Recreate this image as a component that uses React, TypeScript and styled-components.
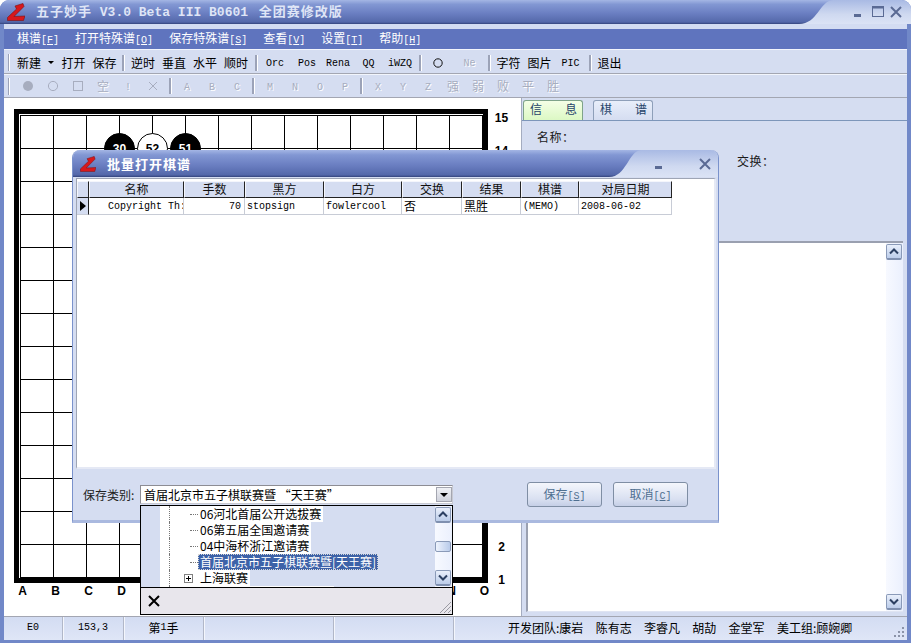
import styled, { createGlobalStyle } from "styled-components";

const CJK = '"Noto Sans CJK SC", "Liberation Sans", sans-serif';
const MONO = '"Liberation Mono", "Noto Sans CJK SC", monospace';

const GlobalStyle = createGlobalStyle`
  html, body {
    margin: 0;
    padding: 0;
    background: #fff;
  }
  * {
    box-sizing: border-box;
  }
`;

const Window = styled.div`
  position: relative;
  width: 911px;
  height: 643px;
  display: flex;
  flex-direction: column;
  overflow: hidden;
  border-radius: 9px 9px 0 0;
  background: #7188c8;
  font-family: ${CJK};
  font-size: 12px;
  line-height: 16px;
  color: #000;
`;

const TitleBar = styled.div<{ $height: number }>`
  display: flex;
  flex: none;
  height: ${(p) => p.$height}px;
`;

const TitleDark = styled.div`
  flex: 1;
  display: flex;
  align-items: center;
  background: linear-gradient(#a4b6e4 0%, #8297d3 18%, #6b7fc2 55%, #5468aa 92%, #33437c 100%);
`;

const TitleLight = styled.div<{ $width: number }>`
  flex: none;
  width: ${(p) => p.$width}px;
  display: flex;
  align-items: center;
  justify-content: flex-end;
  background: linear-gradient(#a9bae4, #cfd9f0 60%, #dbe3f5);
`;

const AppTitle = styled.span<{ $left: number }>`
  margin-left: ${(p) => p.$left}px;
  font-weight: 700;
  font-size: 13px;
  letter-spacing: 1px;
  color: #dfe5f6;
  white-space: pre;
`;

const AppTitleMono = styled.span`
  font-family: ${MONO};
  font-size: 13px;
  letter-spacing: 0;
  font-weight: 700;
  margin-right: 3px;
`;

const DialogTitle = styled.span`
  margin-left: 11px;
  font-weight: 700;
  font-size: 13px;
  letter-spacing: 1px;
  color: #fff;
`;

const LogoWrap = styled.svg<{ $left: number }>`
  flex: none;
  margin-left: ${(p) => p.$left}px;
`;

const CaptionButton = styled.svg`
  flex: none;
  display: block;
`;

const Content = styled.div`
  flex: 1;
  min-height: 0;
  margin: 0 4px 3px;
  display: flex;
  flex-direction: column;
  background: #d5ddf1;
`;

const TopStrip = styled.div`
  flex: none;
  height: 5px;
  background: #d3dcf2;
`;

const MenuBar = styled.div`
  flex: none;
  height: 20px;
  display: flex;
  align-items: center;
  gap: 16px;
  padding-left: 13px;
  background: #5f74be;
  color: #fff;
`;

const MenuItem = styled.span`
  white-space: nowrap;
`;

const Mono = styled.span`
  font-family: ${MONO};
  font-size: 10px;
`;

const Toolbar = styled.div<{ $height: number; $top?: number }>`
  flex: none;
  height: ${(p) => p.$height}px;
  display: flex;
  align-items: center;
  padding: ${(p) => p.$top ?? 0}px 0 0 4px;
  border-top: 1px solid #f2f5fc;
  border-bottom: 1px solid #a3a6b2;
  background: #d5ddf1;
`;

const Grip = styled.i<{ $gap: number }>`
  flex: none;
  width: 2px;
  height: 17px;
  margin-right: ${(p) => p.$gap}px;
  background: #9ba2b8;
  border-right: 1px solid #fff;
`;

const ToolButton = styled.span<{ $w: number; $shift?: number; $off?: boolean }>`
  flex: none;
  width: ${(p) => p.$w}px;
  padding-left: ${(p) => p.$shift ?? 0}px;
  text-align: center;
  white-space: nowrap;
  color: ${(p) => (p.$off ? "#a7adbf" : "#000")};
  text-shadow: ${(p) => (p.$off ? "1px 1px 0 #fff" : "none")};
`;

const ToolLatin = styled.span`
  font-family: ${MONO};
  font-size: 10px;
`;

const Separator = styled.span<{ $w: number }>`
  flex: none;
  width: ${(p) => p.$w}px;
  display: flex;
  justify-content: center;

  &::after {
    content: "";
    width: 2px;
    height: 16px;
    background: #9ca3b8;
    border-right: 1px solid #fff;
  }
`;

const Shape = styled.svg`
  display: block;
  margin: 0 auto;
`;

const DropCaret = styled.i`
  display: block;
  width: 0;
  height: 0;
  margin: 0 auto;
  border-style: solid;
  border-width: 3px 3px 0;
  border-color: #000 transparent transparent;
`;

const Main = styled.div`
  flex: 1;
  min-height: 0;
  display: flex;
`;

const BoardArea = styled.div`
  flex: none;
  width: 517px;
  background: #fff;
  padding: 11px 0 0 10px;
  display: grid;
  grid-template-columns: 474px auto;
  grid-template-rows: 474px auto;
  align-content: start;
`;

const BoardFrame = styled.div`
  width: 474px;
  height: 474px;
  border: 5px solid #000;
  padding: 1px 0 0 1px;
`;

const BoardGrid = styled.div`
  position: relative;
  width: 463px;
  height: 463px;
  background-color: #fff;
  background-image:
    repeating-linear-gradient(to right, #000 0, #000 1px, transparent 1px, transparent 33px),
    repeating-linear-gradient(to bottom, #000 0, #000 1px, transparent 1px, transparent 33px);
`;

const Stone = styled.div<{ $col: number; $row: number; $white?: boolean }>`
  position: absolute;
  left: ${(p) => p.$col * 33 - 15}px;
  top: ${(p) => p.$row * 33 - 15}px;
  width: 31px;
  height: 31px;
  border-radius: 50%;
  display: flex;
  align-items: center;
  justify-content: center;
  border: 1px solid #000;
  background: ${(p) => (p.$white ? "#fff" : "#000")};
  color: ${(p) => (p.$white ? "#000" : "#fff")};
  font-family: "Liberation Sans", sans-serif;
  font-weight: 700;
  font-size: 12px;
`;

const RowLabels = styled.div`
  margin-top: -7px;
  padding-left: 5px;
  display: flex;
  flex-direction: column;
`;

const ColLabels = styled.div`
  display: flex;
  margin-left: -8px;
`;

const AxisLabel = styled.span`
  flex: none;
  width: 33px;
  height: 16px;
  font-family: "Liberation Sans", sans-serif;
  font-weight: 700;
  font-size: 12px;
  line-height: 16px;
  text-align: center;
`;

const RowLabel = styled(AxisLabel)`
  width: 17px;
  height: 33px;
  line-height: 33px;
`;

const SidePanel = styled.div`
  flex: 1;
  min-width: 0;
  display: flex;
  flex-direction: column;
  background: #d5ddf1;
  border-left: 1px solid #a4acc0;
`;

const Tabs = styled.div`
  flex: none;
  height: 23px;
  padding: 2px 0 0 1px;
  display: flex;
  gap: 10px;
  border-bottom: 1px solid #7d96ba;
`;

const Tab = styled.span<{ $active?: boolean }>`
  width: 60px;
  height: 20px;
  padding: 0 5px 0 6px;
  display: flex;
  justify-content: space-between;
  border: 1px solid ${(p) => (p.$active ? "#7fa38a" : "#8e9fb9")};
  border-bottom: none;
  border-radius: 3px 3px 0 0;
  background: ${(p) => (p.$active ? "linear-gradient(#f4ffe6, #dcf8c4)" : "linear-gradient(#e8eefa, #d5ddf1)")};
  color: #27446a;
`;

const InfoGrid = styled.div`
  flex: none;
  height: 120px;
  padding: 8px 15px 0;
  display: grid;
  grid-template-columns: 200px 1fr;
  grid-auto-rows: 24px;
  align-content: start;
  color: #1a1a1a;
`;

const InfoLabel = styled.span`
  letter-spacing: 0.5px;
`;

const MemoWrap = styled.div`
  flex: 1;
  min-height: 0;
  margin: 0 4px 4px 4px;
  display: flex;
  background: #fff;
  border-left: 2px solid #9aa0b0;
  border-top: 2px solid #9aa0b0;
  border-bottom: 1px solid #dfe4f2;
`;

const MemoText = styled.div`
  flex: 1;
`;

const ScrollBar = styled.div`
  flex: none;
  width: 17px;
  display: flex;
  flex-direction: column;
  justify-content: space-between;
  padding: 1px 0;
  background: linear-gradient(to right, #f7f9ff, #ebf0fd);
`;

const ScrollButton = styled.div`
  flex: none;
  width: 16px;
  height: 16px;
  display: flex;
  align-items: center;
  justify-content: center;
  border: 1px solid #8a9ab8;
  border-bottom: 2px solid #7f90b0;
  border-radius: 2px;
  background: linear-gradient(#e9effb, #bccdea);
`;

const ScrollThumb = styled.div`
  flex: none;
  width: 16px;
  height: 11px;
  border: 1px solid #8a9ab8;
  border-radius: 2px;
  background: linear-gradient(to right, #eef3fd, #b9cbea);
`;

const StatusBar = styled.div`
  flex: none;
  height: 24px;
  display: flex;
  align-items: center;
  border-top: 1px solid #a3a6b2;
  background: linear-gradient(#d3dcf2, #dfe6f7);
`;

const StatusCell = styled.span<{ $w: number }>`
  flex: none;
  width: ${(p) => p.$w}px;
  height: 100%;
  padding-bottom: 2px;
  display: flex;
  align-items: center;
  justify-content: center;
  border-right: 1px solid #b1b7c8;
  box-shadow: 1px 0 0 #f4f6fc;
`;

const Team = styled.div`
  flex: 1;
  padding: 0 0 2px 54px;
  display: flex;
  gap: 12.3px;
  white-space: nowrap;
`;

const ResizeDots = styled.svg`
  flex: none;
  margin: 6px 2px 0 0;
`;

const Dialog = styled.div`
  position: absolute;
  left: 72px;
  top: 150px;
  width: 647px;
  height: 373px;
  display: flex;
  flex-direction: column;
  overflow: hidden;
  border-radius: 8px 8px 0 0;
  background: #d5ddf1;
  border-left: 1px solid #7a92cc;
  border-right: 1px solid #7a92cc;
  border-bottom: 3px solid #aab9df;
`;

const DialogBody = styled.div`
  flex: none;
  height: 291px;
  margin: 1px 2px 0 3px;
  padding: 2px 0 0 0;
  background: #fff;
  border-top: 1px solid #9ea5b5;
  border-left: 1px solid #9ea5b5;
  border-right: 2px solid #e5e9f5;
  border-bottom: 2px solid #e5e9f5;
`;

const TableRow = styled.div<{ $height: number }>`
  display: grid;
  grid-template-columns: 12px 95px 61px 79px 78px 60px 59px 58px 93px;
  width: 595px;
  height: ${(p) => p.$height}px;
`;

const HeadCell = styled.div`
  text-align: center;
  line-height: 14px;
  background: #d5ddf1;
  border-right: 1px solid #222;
  border-bottom: 1px solid #222;
  border-left: 1px solid #f4f6fc;
  border-top: 1px solid #f4f6fc;
  color: #111;
`;

const Cell = styled.div<{ $right?: boolean; $pad?: number }>`
  padding: 0 ${(p) => (p.$right ? 3 : 0)}px 0 ${(p) => p.$pad ?? 2}px;
  overflow: hidden;
  white-space: nowrap;
  text-align: ${(p) => (p.$right ? "right" : "left")};
  font-family: ${MONO};
  font-size: 10px;
  line-height: 17px;
  border-right: 1px solid #c8ccd6;
  border-bottom: 1px solid #c8ccd6;
`;

const CjkCell = styled(Cell)`
  font-family: ${CJK};
  font-size: 12px;
  line-height: 15px;
`;

const Indicator = styled.div`
  display: flex;
  align-items: center;
  justify-content: center;
  background: #d5ddf1;
  border-right: 1px solid #222;
  border-bottom: 1px solid #c8ccd6;

  &::after {
    content: "";
    border-style: solid;
    border-width: 5px 0 5px 6px;
    border-color: transparent transparent transparent #000;
  }
`;

const DialogFooter = styled.div`
  flex: 1;
  display: flex;
  align-items: center;
  padding-left: 10px;
`;

const ComboLabel = styled.span`
  flex: none;
  width: 57px;
  color: #222;
`;

const Combo = styled.div`
  flex: none;
  width: 313px;
  height: 19px;
  display: flex;
  align-items: center;
  justify-content: space-between;
  padding: 0 0 0 3px;
  background: #fff;
  border: 1px solid #8d8d94;
  border-right-color: #c7c9d2;
  border-bottom-color: #c7c9d2;
  white-space: nowrap;
`;

const ComboArrow = styled.span`
  flex: none;
  width: 16px;
  height: 15px;
  display: flex;
  align-items: center;
  background: linear-gradient(#f0f1f5, #cfd2dc);
  border: 1px solid #a4a6b0;
`;

const ComboCaret = styled(DropCaret)`
  border-width: 4px 4px 0;
`;

const DialogButtons = styled.div`
  margin-left: 74px;
  display: flex;
  gap: 11px;
`;

const DialogButton = styled.span`
  flex: none;
  width: 75px;
  height: 25px;
  line-height: 22px;
  text-align: center;
  color: #4f6f90;
  border: 1px solid #7f8ea4;
  border-radius: 3px;
  background: linear-gradient(#f4f6fc, #d9e0f1 70%, #c5cfe6);
`;

const ButtonHotkey = styled(Mono)`
  color: #4f6f90;
`;

const Dropdown = styled.div`
  position: absolute;
  left: 140px;
  top: 505px;
  width: 313px;
  height: 110px;
  display: flex;
  flex-direction: column;
  border: 1px solid #000;
  background: #d5ddf1;
`;

const DropdownList = styled.div`
  flex: 1;
  min-height: 0;
  display: flex;
  border-bottom: 1px solid #000;
`;

const Tree = styled.div`
  flex: 1;
  min-width: 0;
  overflow: hidden;
  padding-left: 19px;
`;

const TreeRow = styled.div<{ $leaf?: boolean; $stub?: number }>`
  position: relative;
  width: ${(p) => (p.$stub ? `${p.$stub}px` : "fit-content")};
  height: 16px;
  padding-left: 38px;
  background: #fff;
  white-space: nowrap;

  &::before {
    content: "";
    position: absolute;
    left: 9px;
    top: 0;
    bottom: 0;
    border-left: 1px dotted #777;
  }

  &::after {
    content: "";
    display: ${(p) => (p.$leaf ? "block" : "none")};
    position: absolute;
    left: 30px;
    top: 8px;
    width: 8px;
    border-top: 1px dotted #777;
  }
`;

const TreeLabel = styled.span<{ $selected?: boolean }>`
  display: inline-block;
  height: 16px;
  line-height: 15px;
  padding: 0 2px;
  background: ${(p) => (p.$selected ? "#3d62a8" : "transparent")};
  color: ${(p) => (p.$selected ? "#fff" : "#000")};
  outline: ${(p) => (p.$selected ? "1px dotted #d8d8d8" : "none")};
  outline-offset: -1px;
`;

const Expander = styled.svg`
  position: absolute;
  left: 24px;
  top: 4px;
`;

const DropdownFooter = styled.div`
  flex: none;
  height: 26px;
  display: flex;
  align-items: center;
  justify-content: space-between;
  padding-left: 7px;
  background: #e8e6ec;
`;

const CloseGlyph = styled.svg`
  flex: none;
`;

const ResizeHatch = styled.svg`
  flex: none;
  align-self: flex-end;
`;

function Logo({ left, size }: { left: number; size: number }) {
  return (
    <LogoWrap $left={left} width={size} height={size} viewBox="0 0 18 18">
      <path
        d="M8 3 L16 0.5 L17 3.5 L7 13.5 L18 13 L16.5 17.5 L0.5 17.5 L0.5 14.5 L9.5 6 Z"
        fill="#d8181c"
        stroke="#7c1212"
        strokeWidth="0.6"
      />
    </LogoWrap>
  );
}

function TitleCurve({ width, height, id }: { width: number; height: number; id: string }) {
  const bottom = height;
  return (
    <svg width={width} height={height} style={{ flex: "none", display: "block" }}>
      <defs>
        <linearGradient id={id} x1="0" y1="0" x2="0" y2="1">
          <stop offset="0" stopColor="#a4b6e4" />
          <stop offset="0.18" stopColor="#8297d3" />
          <stop offset="0.55" stopColor="#6b7fc2" />
          <stop offset="0.92" stopColor="#5468aa" />
          <stop offset="1" stopColor="#33437c" />
        </linearGradient>
        <linearGradient id={`${id}l`} x1="0" y1="0" x2="0" y2="1">
          <stop offset="0" stopColor="#a9bae4" />
          <stop offset="0.6" stopColor="#cfd9f0" />
          <stop offset="1" stopColor="#dbe3f5" />
        </linearGradient>
      </defs>
      <rect width={width} height={height} fill={`url(#${id}l)`} />
      <path
        d={`M0 0 H${width} C${width * 0.6} 1 ${width * 0.55} ${bottom} 0 ${bottom} Z`}
        fill={`url(#${id})`}
      />
    </svg>
  );
}

const Minimize = () => (
  <CaptionButton width="20" height="14" viewBox="0 0 20 14">
    <rect x="6" y="9" width="7" height="3" fill="#5a6a94" />
  </CaptionButton>
);

const Maximize = () => (
  <CaptionButton width="21" height="14" viewBox="0 0 21 14">
    <rect x="4.5" y="1.5" width="11" height="10" fill="none" stroke="#5a6a94" />
    <rect x="4" y="1" width="12" height="2.5" fill="#5a6a94" />
  </CaptionButton>
);

const CloseX = ({ right }: { right: number }) => (
  <CaptionButton width={14 + right} height="14" viewBox={`0 0 ${14 + right} 14`}>
    <path d="M2 2 L12 12 M12 2 L2 12" stroke="#5a6a94" strokeWidth="2" />
  </CaptionButton>
);

const Chevron = ({ down }: { down?: boolean }) => (
  <svg width="10" height="7" viewBox="0 0 10 7">
    <path d={down ? "M1 1.5 L5 5.5 L9 1.5" : "M1 5.5 L5 1.5 L9 5.5"} fill="none" stroke="#2c4062" strokeWidth="2" />
  </svg>
);

type Tool = { label: string; w: number; latin?: boolean; shift?: number; off?: boolean } | { sep: number } | { caret: number } | { circle: number };

const toolsTop: Tool[] = [
  { label: "新建", w: 31 },
  { caret: 13.5 },
  { label: "打开", w: 31 },
  { label: "保存", w: 31 },
  { sep: 7.5 },
  { label: "逆时", w: 31 },
  { label: "垂直", w: 31 },
  { label: "水平", w: 31 },
  { label: "顺时", w: 31 },
  { sep: 10.5 },
  { label: "Orc", w: 26, latin: true },
  { label: "Pos", w: 38, latin: true },
  { label: "Rena", w: 24, latin: true },
  { label: "QQ", w: 37, latin: true },
  { label: "iWZQ", w: 26, latin: true },
  { sep: 14 },
  { circle: 22 },
  { label: "Ne", w: 36, latin: true, shift: 5, off: true },
  { sep: 8 },
  { label: "字符", w: 31 },
  { label: "图片", w: 31 },
  { label: "PIC", w: 31, latin: true },
  { sep: 8 },
  { label: "退出", w: 31 },
];

const lettersA = ["A", "B", "C"];
const lettersM = ["M", "N", "O", "P"];
const lettersX = ["X", "Y", "Z"];
const wordsEnd = ["强", "弱", "败", "平", "胜"];
const columns = "ABCDEFGHIJKLMNO".split("");
const rows = Array.from({ length: 15 }, (_, i) => 15 - i);

function TopTools() {
  return (
    <>
      {toolsTop.map((t, i) => {
        if ("sep" in t) return <Separator key={i} $w={t.sep} />;
        if ("caret" in t)
          return (
            <ToolButton key={i} $w={t.caret}>
              <DropCaret />
            </ToolButton>
          );
        if ("circle" in t)
          return (
            <ToolButton key={i} $w={t.circle}>
              <Shape width="10" height="10" viewBox="0 0 10 10">
                <circle cx="5" cy="5" r="4.2" fill="none" stroke="#111" />
              </Shape>
            </ToolButton>
          );
        return (
          <ToolButton key={i} $w={t.w} $shift={t.shift} $off={t.off}>
            {t.latin ? <ToolLatin>{t.label}</ToolLatin> : t.label}
          </ToolButton>
        );
      })}
    </>
  );
}

const Disabled = ({ children }: { children: React.ReactNode }) => (
  <ToolButton $w={25} $off>
    {children}
  </ToolButton>
);

function BottomTools() {
  return (
    <>
      <Disabled>
        <Shape width="12" height="12" viewBox="0 0 12 12">
          <circle cx="6" cy="6" r="5" fill="#a7adbf" />
        </Shape>
      </Disabled>
      <Disabled>
        <Shape width="12" height="12" viewBox="0 0 12 12">
          <circle cx="6" cy="6" r="4.6" fill="none" stroke="#a7adbf" />
        </Shape>
      </Disabled>
      <Disabled>
        <Shape width="12" height="12" viewBox="0 0 12 12">
          <rect x="1.5" y="1.5" width="9" height="9" fill="none" stroke="#a7adbf" />
        </Shape>
      </Disabled>
      <Disabled>空</Disabled>
      <Disabled>
        <ToolLatin>!</ToolLatin>
      </Disabled>
      <Disabled>
        <Shape width="12" height="12" viewBox="0 0 12 12">
          <path d="M2 2 L10 10 M10 2 L2 10" stroke="#a7adbf" />
        </Shape>
      </Disabled>
      <Separator $w={9} />
      {lettersA.map((l) => (
        <Disabled key={l}>
          <ToolLatin>{l}</ToolLatin>
        </Disabled>
      ))}
      <Separator $w={8} />
      {lettersM.map((l) => (
        <Disabled key={l}>
          <ToolLatin>{l}</ToolLatin>
        </Disabled>
      ))}
      <Separator $w={8} />
      {lettersX.map((l) => (
        <Disabled key={l}>
          <ToolLatin>{l}</ToolLatin>
        </Disabled>
      ))}
      {wordsEnd.map((w) => (
        <Disabled key={w}>{w}</Disabled>
      ))}
    </>
  );
}

export default function App() {
  return (
    <>
      <GlobalStyle />
      <Window>
        <TitleBar $height={24}>
          <TitleDark>
            <Logo left={7} size={18} />
            <AppTitle $left={11}>
              五子妙手
              <AppTitleMono> V3.0 Beta III B0601 </AppTitleMono>
              全团赛修改版
            </AppTitle>
          </TitleDark>
          <TitleCurve id="mainCurve" width={34} height={24} />
          <TitleLight $width={78}>
            <Minimize />
            <Maximize />
            <CloseX right={8} />
          </TitleLight>
        </TitleBar>
        <Content>
          <TopStrip />
          <MenuBar>
            <MenuItem>
              棋谱<Mono>[<u>F</u>]</Mono>
            </MenuItem>
            <MenuItem>
              打开特殊谱<Mono>[<u>O</u>]</Mono>
            </MenuItem>
            <MenuItem>
              保存特殊谱<Mono>[<u>S</u>]</Mono>
            </MenuItem>
            <MenuItem>
              查看<Mono>[<u>V</u>]</Mono>
            </MenuItem>
            <MenuItem>
              设置<Mono>[<u>T</u>]</Mono>
            </MenuItem>
            <MenuItem>
              帮助<Mono>[<u>H</u>]</Mono>
            </MenuItem>
          </MenuBar>
          <Toolbar $height={25} $top={2}>
            <Grip $gap={3.5} />
            <TopTools />
          </Toolbar>
          <Toolbar $height={24}>
            <Grip $gap={5.5} />
            <BottomTools />
          </Toolbar>
          <Main>
            <BoardArea>
              <BoardFrame>
                <BoardGrid>
                  <Stone $col={3} $row={1}>30</Stone>
                  <Stone $col={4} $row={1} $white>52</Stone>
                  <Stone $col={5} $row={1}>51</Stone>
                </BoardGrid>
              </BoardFrame>
              <RowLabels>
                {rows.map((r) => (
                  <RowLabel key={r}>{r}</RowLabel>
                ))}
              </RowLabels>
              <ColLabels>
                {columns.map((c) => (
                  <AxisLabel key={c}>{c}</AxisLabel>
                ))}
              </ColLabels>
            </BoardArea>
            <SidePanel>
              <Tabs>
                <Tab $active>
                  <span>信</span>
                  <span>息</span>
                </Tab>
                <Tab>
                  <span>棋</span>
                  <span>谱</span>
                </Tab>
              </Tabs>
              <InfoGrid>
                <InfoLabel>名称：</InfoLabel>
                <span />
                <span />
                <InfoLabel>交换：</InfoLabel>
              </InfoGrid>
              <MemoWrap>
                <MemoText />
                <ScrollBar>
                  <ScrollButton>
                    <Chevron />
                  </ScrollButton>
                  <ScrollButton>
                    <Chevron down />
                  </ScrollButton>
                </ScrollBar>
              </MemoWrap>
            </SidePanel>
          </Main>
          <StatusBar>
            <StatusCell $w={59}>
              <Mono>E0</Mono>
            </StatusCell>
            <StatusCell $w={61}>
              <Mono>153,3</Mono>
            </StatusCell>
            <StatusCell $w={80}>
              第<Mono>1</Mono>手
            </StatusCell>
            <StatusCell $w={130} />
            <StatusCell $w={120} />
            <Team>
              <span>开发团队:康岩</span>
              <span>陈有志</span>
              <span>李睿凡</span>
              <span>胡劼</span>
              <span>金堂军</span>
              <span>美工组:顾婉卿</span>
            </Team>
            <ResizeDots width="12" height="12" viewBox="0 0 12 12">
              <path d="M9 1h2v2H9zM5 5h2v2H5zM9 5h2v2H9zM1 9h2v2H1zM5 9h2v2H5zM9 9h2v2H9z" fill="#8b93a8" />
            </ResizeDots>
          </StatusBar>
        </Content>

        <Dialog>
          <TitleBar $height={27}>
            <TitleDark>
              <Logo left={7} size={16} />
              <DialogTitle>批量打开棋谱</DialogTitle>
            </TitleDark>
            <TitleCurve id="dialogCurve" width={32} height={27} />
            <TitleLight $width={77}>
              <Minimize />
              <CaptionButton width="29" height="14" viewBox="0 0 29 14" />
              <CloseX right={6} />
            </TitleLight>
          </TitleBar>
          <DialogBody>
            <TableRow $height={17}>
              <HeadCell />
              <HeadCell>名称</HeadCell>
              <HeadCell>手数</HeadCell>
              <HeadCell>黑方</HeadCell>
              <HeadCell>白方</HeadCell>
              <HeadCell>交换</HeadCell>
              <HeadCell>结果</HeadCell>
              <HeadCell>棋谱</HeadCell>
              <HeadCell>对局日期</HeadCell>
            </TableRow>
            <TableRow $height={17}>
              <Indicator />
              <Cell $pad={19}>Copyright Th:</Cell>
              <Cell $right>70</Cell>
              <Cell>stopsign</Cell>
              <Cell>fowlercool</Cell>
              <CjkCell>否</CjkCell>
              <CjkCell>黑胜</CjkCell>
              <Cell>(MEMO)</Cell>
              <Cell>2008-06-02</Cell>
            </TableRow>
          </DialogBody>
          <DialogFooter>
            <ComboLabel>保存类别:</ComboLabel>
            <Combo>
              <span>首届北京市五子棋联赛暨 “天王赛”</span>
              <ComboArrow>
                <ComboCaret />
              </ComboArrow>
            </Combo>
            <DialogButtons>
              <DialogButton>
                保存<ButtonHotkey>[<u>S</u>]</ButtonHotkey>
              </DialogButton>
              <DialogButton>
                取消<ButtonHotkey>[<u>C</u>]</ButtonHotkey>
              </DialogButton>
            </DialogButtons>
          </DialogFooter>
        </Dialog>

        <Dropdown>
          <DropdownList>
            <Tree>
              <TreeRow $leaf>
                <TreeLabel>06河北首届公开选拔赛</TreeLabel>
              </TreeRow>
              <TreeRow $leaf>
                <TreeLabel>06第五届全国邀请赛</TreeLabel>
              </TreeRow>
              <TreeRow $leaf>
                <TreeLabel>04中海杯浙江邀请赛</TreeLabel>
              </TreeRow>
              <TreeRow $leaf>
                <TreeLabel $selected>首届北京市五子棋联赛暨[天王赛]</TreeLabel>
              </TreeRow>
              <TreeRow>
                <Expander width="9" height="9" viewBox="0 0 9 9">
                  <rect x="0.5" y="0.5" width="8" height="8" fill="#fff" stroke="#808080" />
                  <path d="M2 4.5 H7 M4.5 2 V7" stroke="#000" />
                </Expander>
                <TreeLabel>上海联赛</TreeLabel>
              </TreeRow>
              <TreeRow $stub={174} />
            </Tree>
            <ScrollBar>
              <ScrollButton>
                <Chevron />
              </ScrollButton>
              <ScrollThumb />
              <ScrollButton>
                <Chevron down />
              </ScrollButton>
            </ScrollBar>
          </DropdownList>
          <DropdownFooter>
            <CloseGlyph width="12" height="12" viewBox="0 0 12 12">
              <path d="M1 1 L11 11 M11 1 L1 11" stroke="#000" strokeWidth="2" />
            </CloseGlyph>
            <ResizeHatch width="14" height="14" viewBox="0 0 14 14">
              <path d="M13 2 L2 13 M13 6 L6 13 M13 10 L10 13" stroke="#9a9aa2" />
            </ResizeHatch>
          </DropdownFooter>
        </Dropdown>
      </Window>
    </>
  );
}
